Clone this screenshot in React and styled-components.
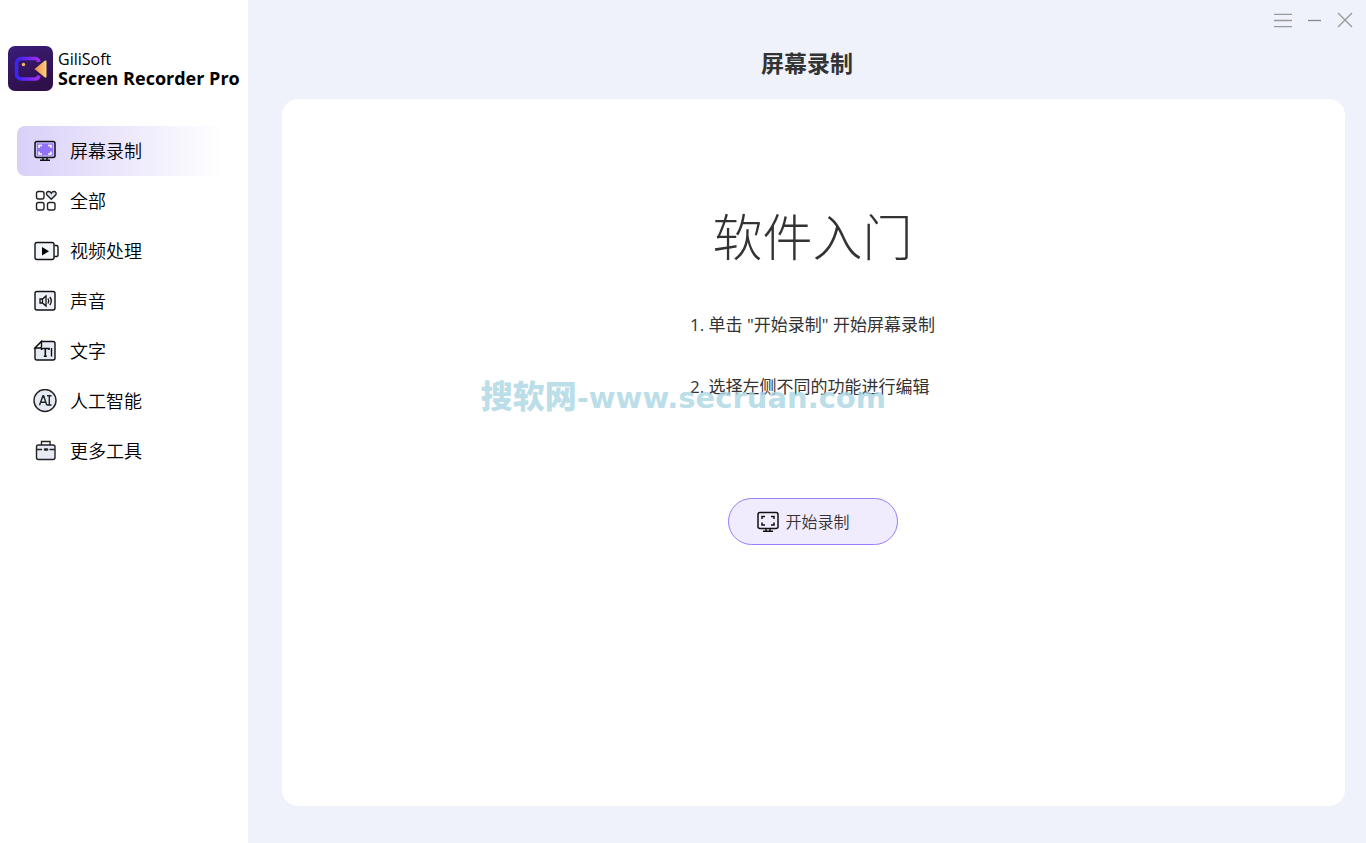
import React, { useState } from 'react';
import styled, { createGlobalStyle } from 'styled-components';

const GlobalStyle = createGlobalStyle`
  * {
    box-sizing: border-box;
  }
  body {
    margin: 0;
    color: #333;
    background: #eff2fa;
    font-family: "Open Sans", "Noto Sans CJK SC", sans-serif;
  }
  h1, h2, p, ul, ol {
    margin: 0;
    padding: 0;
    font-weight: 400;
  }
  ul, ol {
    list-style: none;
  }
  button {
    padding: 0;
    border: 0;
    background: none;
    color: inherit;
    font: inherit;
    cursor: pointer;
  }
  svg {
    display: block;
    flex: none;
  }
`

const LogoMark = () => (
  <svg width="45" height="45" viewBox="0 0 45 45" aria-hidden="true">
    <defs>
      <linearGradient id="logoBg" x1="0" y1="0" x2="0.4" y2="1">
        <stop offset="0" stopColor="#3b1d7c" />
        <stop offset="1" stopColor="#2f1048" />
      </linearGradient>
      <linearGradient id="logoRing" x1="0" y1="0" x2="1" y2="0">
        <stop offset="0" stopColor="#3a25f5" />
        <stop offset="1" stopColor="#a32cf0" />
      </linearGradient>
      <linearGradient id="logoLens" x1="0" y1="0" x2="1" y2="0">
        <stop offset="0" stopColor="#f08a52" />
        <stop offset="1" stopColor="#ffd07a" />
      </linearGradient>
    </defs>
    <rect width="45" height="45" rx="7" fill="url(#logoBg)" />
    <path d="M31 16c-.6-2.500-1.800-3.500-4-3.500H13.500c-3 0-5 2-5 5v10.500c0 3 2 5 5 5H27c2.200 0 3.400-1 4-3.500" fill="none" stroke="url(#logoRing)" strokeWidth="3.500" />
    <path d="M26.500 23 37 14.500q1.500-.5 1.500 1v15q0 1.500-1.500 1z" fill="url(#logoLens)" />
    <circle cx="15.500" cy="18.500" r="1.700" fill="#ffb469" />
  </svg>
)

const ScreenIcon = ({ filled }) => (
  <svg width="24" height="24" viewBox="0 0 24 24" fill="none" stroke="#111" strokeWidth="1.500" aria-hidden="true">
    <rect x="2" y="2.500" width="20" height="16" rx="2" fill={filled ? '#c9bdfb' : 'none'} />
    {filled && <rect x="4" y="4.500" width="16" height="12" fill="#9072fb" stroke="none" />}
    <path d="M10 19v2M14 19v2M7 21.300h10" />
    <path d="M6 9V6.500h3M15 6.500h3V9M18 12.500V15h-3M9 15H6v-2.500" stroke={filled ? '#fff' : '#111'} />
  </svg>
)

const AllIcon = () => (
  <svg width="24" height="24" viewBox="0 0 24 24" fill="none" stroke="#222" strokeWidth="1.400" aria-hidden="true">
    <rect x="3.500" y="2.500" width="7.500" height="7.500" rx="2" />
    <rect x="3.500" y="13.500" width="7.500" height="7.500" rx="2" />
    <rect x="14.500" y="13.500" width="7.500" height="7.500" rx="2" />
    <path d="M18.300 10.300 14 6C12.700 4 14 2.500 15.600 2.500c1.300 0 2.200.7 2.700 1.700.5-1 1.400-1.700 2.700-1.700 1.600 0 2.900 1.500 1.600 3.500z" fill="#e1e7ef" />
  </svg>
)

const VideoIcon = () => (
  <svg width="26" height="24" viewBox="0 0 26 24" fill="none" stroke="#111" strokeWidth="1.400" aria-hidden="true">
    <rect x="2" y="3.500" width="19" height="17" rx="2" fill="#f1f4f9" />
    <path d="M9 8v8.500l7-4.200z" fill="#000" stroke="none" />
    <path d="M21.500 6.500h2q1.500 0 1.500 1.500v8q0 1.500-1.500 1.500h-2" />
  </svg>
)

const SoundIcon = () => (
  <svg width="24" height="24" viewBox="0 0 24 24" fill="none" stroke="#111" strokeWidth="1.400" aria-hidden="true">
    <rect x="2" y="2.500" width="20" height="18.500" rx="2" fill="#eef1f8" />
    <path d="M7 10h2.500L13 7v10l-3.500-3H7zM9.500 10v4M15 9.500q1.500 2.500 0 5M16.800 8q3 4 0 8" strokeWidth="1.300" />
  </svg>
)

const TextIcon = () => (
  <svg width="24" height="24" viewBox="0 0 24 24" fill="none" stroke="#111" strokeWidth="1.400" aria-hidden="true">
    <path d="M8.500 2.500H20q2 0 2 2V19q0 2-2 2H4q-2 0-2-2V9z" fill="#e6eaf4" />
    <path d="M8.500 2.500V7q0 2-2 2H2z" fill="#fff" />
    <path d="M8.500 11V9.500h7.500V11M12.300 9.500V17M10.800 17.300h3" strokeWidth="1.600" />
    <path d="M18.500 9v8.500" />
  </svg>
)

const AiIcon = () => (
  <svg width="24" height="24" viewBox="0 0 24 24" fill="none" stroke="#222" strokeWidth="1.400" aria-hidden="true">
    <circle cx="12" cy="11.500" r="11" fill="#e4e9f4" />
    <path d="M6.500 16.200 10 6.800h.6l3.200 9.400M7.700 13.200h5M14 6.800h4.500M14 16h4.500M16.300 6.800V16" />
  </svg>
)

const ToolsIcon = () => (
  <svg width="24" height="24" viewBox="0 0 24 24" fill="none" stroke="#222" strokeWidth="1.400" aria-hidden="true">
    <rect x="3.500" y="6" width="18.500" height="14.500" rx="2" fill="#e6eaf2" />
    <path d="M8.500 6V2.500h8.500V6M3.500 10.500h5.500M16.500 10.500h5.500" />
    <path d="M12 10.500h2" strokeWidth="2.500" strokeLinecap="round" />
  </svg>
)

const menus = [
  { name: '屏幕录制', icon: <ScreenIcon filled /> },
  { name: '全部', icon: <AllIcon /> },
  { name: '视频处理', icon: <VideoIcon /> },
  { name: '声音', icon: <SoundIcon /> },
  { name: '文字', icon: <TextIcon /> },
  { name: '人工智能', icon: <AiIcon /> },
  { name: '更多工具', icon: <ToolsIcon /> },
]

export default function App() {
  const [current, setCurrent] = useState('屏幕录制');

  return (
    <>
      <GlobalStyle />
      <Layout>
        <Sidebar>
          <Brand>
            <LogoMark />
            <BrandText>
              <p>GiliSoft</p>
              <strong>Screen Recorder Pro</strong>
            </BrandText>
          </Brand>
          <nav>
            <ul>
              {menus.map(({ name, icon }) => (
                <li key={name}>
                  <MenuButton type="button" $active={name === current} onClick={() => setCurrent(name)}>
                    <IconBox>{icon}</IconBox>
                    <Label>{name}</Label>
                  </MenuButton>
                </li>
              ))}
            </ul>
          </nav>
        </Sidebar>

        <Main>
          <WindowBar>
            <WindowButton type="button" aria-label="菜单">
              <svg width="20" height="20" viewBox="0 0 20 20" stroke="#999" strokeWidth="1.300">
                <path d="M1 4.300h18M1 10.500h18M1 16.700h18" />
              </svg>
            </WindowButton>
            <WindowButton type="button" aria-label="最小化">
              <svg width="20" height="20" viewBox="0 0 20 20" stroke="#888" strokeWidth="1.300">
                <path d="M4 10.500h13" />
              </svg>
            </WindowButton>
            <WindowButton type="button" aria-label="关闭">
              <svg width="20" height="20" viewBox="0 0 20 20" stroke="#999" strokeWidth="1.400">
                <path d="M3 3l14 14M17 3 3 17" />
              </svg>
            </WindowButton>
          </WindowBar>
          <Title>{current}</Title>
          <Card>
            <Heading>软件入门</Heading>
            <Steps>
              <li>1. 单击 "开始录制" 开始屏幕录制</li>
              <li>2. 选择左侧不同的功能进行编辑</li>
              <Watermark>
                <b>搜软网</b>-www.secruan.com
              </Watermark>
            </Steps>
            <StartButton type="button">
              <ScreenIcon />
              <Label>开始录制</Label>
            </StartButton>
          </Card>
        </Main>
      </Layout>
    </>
  );
}

const Layout = styled.div`
  display: flex;
  min-height: 100vh;
`
const Sidebar = styled.aside`
  flex: none;
  width: 248px;
  padding-top: 46px;
  background: #fff;
  color: #000;
`
const Brand = styled.div`
  display: flex;
  align-items: center;
  gap: 5px;
  margin-bottom: 35px;
  padding-left: 8px;
  white-space: nowrap;
`
const BrandText = styled.div`
  font-size: 16px;
  line-height: 19px;

  strong {
    display: block;
    font-size: 18px;
    font-weight: 700;
  }
`
const MenuButton = styled.button`
  display: flex;
  align-items: center;
  gap: 11px;
  width: 206px;
  height: 50px;
  margin-left: 17px;
  padding-left: 16px;
  border-radius: 8px;
  background: ${(props) => (props.$active ? 'linear-gradient(90deg, #d9d0f8, #fff)' : 'none')};
  font-size: 18px;
`
const IconBox = styled.span`
  width: 26px;
`
const Label = styled.span`
  padding-bottom: 2px;
  font-weight: 350;
`
const Main = styled.main`
  flex: 1;
  display: flex;
  flex-direction: column;
`
const WindowBar = styled.div`
  display: flex;
  justify-content: flex-end;
  gap: 11px;
  padding: 10px 11px 0 0;
`
const WindowButton = styled.button`
  width: 20px;
  height: 20px;
`
const Title = styled.h1`
  margin: 15px 0 18px;
  font-size: 23px;
  font-weight: 700;
  line-height: 36px;
  text-align: center;
`
const Card = styled.section`
  flex: 1;
  display: flex;
  flex-direction: column;
  align-items: center;
  margin: 0 21px 37px 34px;
  padding: 98px 2px 0 0;
  border-radius: 16px;
  background: #fff;
`
const Heading = styled.h2`
  font-size: 50px;
  font-weight: 300;
  line-height: 80px;
`
const Steps = styled.ol`
  position: relative;
  display: grid;
  gap: 38px;
  margin: 36px 0 99px;
  font-size: 17px;
  line-height: 24px;
`
// lies over the second step
const Watermark = styled.li`
  position: absolute;
  top: 61px;
  right: 49px;
  color: rgba(168, 213, 228, 0.8);
  font-family: "DejaVu Sans", "Noto Sans CJK SC", sans-serif;
  font-size: 29px;
  font-weight: 700;
  line-height: 40px;
  white-space: nowrap;

  b {
    font-family: "Noto Sans CJK SC", sans-serif;
    font-size: 32px;
    font-weight: 900;
  }
`
const StartButton = styled.button`
  display: flex;
  align-items: center;
  gap: 6px;
  width: 170px;
  height: 47px;
  padding-left: 27px;
  border: 1px solid #9b7bf7;
  border-radius: 24px;
  background: #f1ecfd;
  font-size: 16px;
`
